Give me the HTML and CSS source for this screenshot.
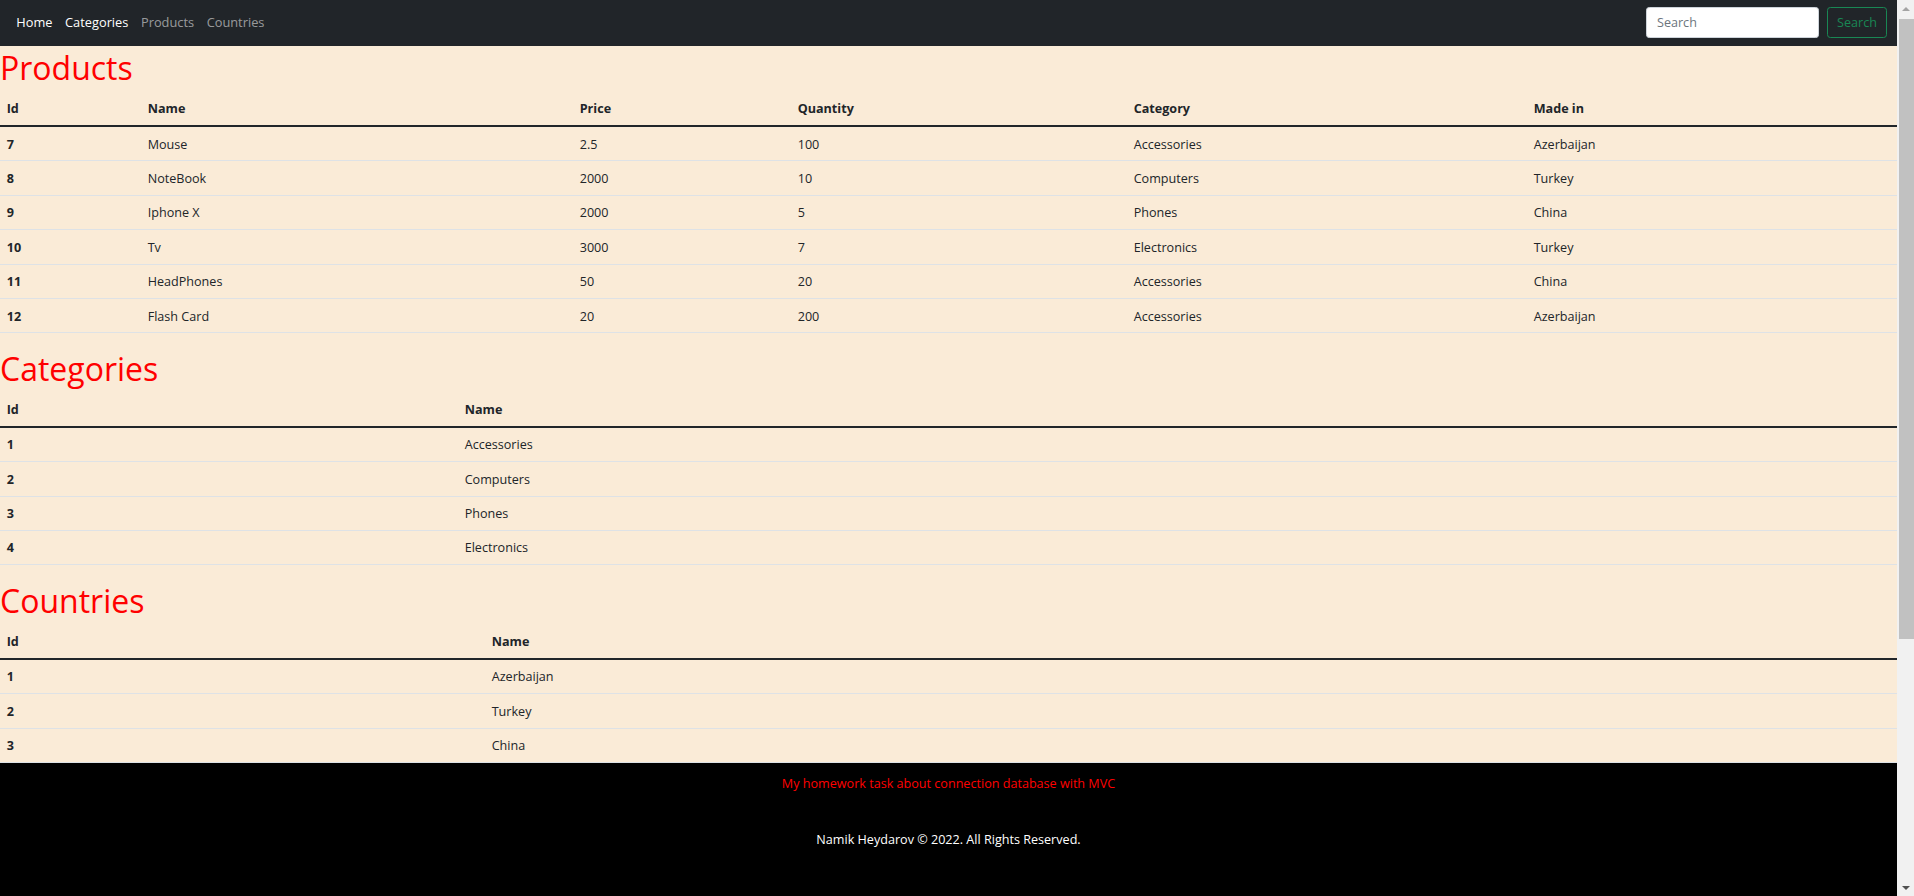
FILE: index.html
```html
<!DOCTYPE html>
<html lang="en">
<head>
<meta charset="utf-8">
<title>Homework</title>
<link rel="stylesheet" href="styles.css">
</head>
<body>
<div class="page">
  <nav class="navbar">
    <ul class="nav">
      <li><a class="nav-link active" href="#">Home</a></li>
      <li><a class="nav-link active" href="#">Categories</a></li>
      <li><a class="nav-link" href="#">Products</a></li>
      <li><a class="nav-link" href="#">Countries</a></li>
    </ul>
    <form class="search">
      <input class="search-input" type="search" placeholder="Search">
      <button class="search-btn" type="button">Search</button>
    </form>
  </nav>
  <main class="content">
    <section class="block">
      <h1 class="title">Products</h1>
      <table class="table products">
        <colgroup>
          <col class="c-id"><col class="c-name"><col class="c-price"><col class="c-qty"><col class="c-cat"><col>
        </colgroup>
        <thead>
          <tr><th>Id</th><th>Name</th><th>Price</th><th>Quantity</th><th>Category</th><th>Made in</th></tr>
        </thead>
        <tbody>
          <tr><th>7</th><td>Mouse</td><td>2.5</td><td>100</td><td>Accessories</td><td>Azerbaijan</td></tr>
          <tr><th>8</th><td>NoteBook</td><td>2000</td><td>10</td><td>Computers</td><td>Turkey</td></tr>
          <tr><th>9</th><td>Iphone X</td><td>2000</td><td>5</td><td>Phones</td><td>China</td></tr>
          <tr><th>10</th><td>Tv</td><td>3000</td><td>7</td><td>Electronics</td><td>Turkey</td></tr>
          <tr><th>11</th><td>HeadPhones</td><td>50</td><td>20</td><td>Accessories</td><td>China</td></tr>
          <tr><th>12</th><td>Flash Card</td><td>20</td><td>200</td><td>Accessories</td><td>Azerbaijan</td></tr>
        </tbody>
      </table>
    </section>
    <section class="block">
      <h1 class="title">Categories</h1>
      <table class="table categories">
        <colgroup><col class="c-id2"><col></colgroup>
        <thead>
          <tr><th>Id</th><th>Name</th></tr>
        </thead>
        <tbody>
          <tr><th>1</th><td>Accessories</td></tr>
          <tr><th>2</th><td>Computers</td></tr>
          <tr><th>3</th><td>Phones</td></tr>
          <tr><th>4</th><td>Electronics</td></tr>
        </tbody>
      </table>
    </section>
    <section class="block">
      <h1 class="title">Countries</h1>
      <table class="table countries">
        <colgroup><col class="c-id3"><col></colgroup>
        <thead>
          <tr><th>Id</th><th>Name</th></tr>
        </thead>
        <tbody>
          <tr><th>1</th><td>Azerbaijan</td></tr>
          <tr><th>2</th><td>Turkey</td></tr>
          <tr><th>3</th><td>China</td></tr>
        </tbody>
      </table>
    </section>
  </main>
  <footer class="footer">
    <p class="footer-task">My homework task about connection database with MVC</p>
    <p class="footer-copy">Namik Heydarov © 2022. All Rights Reserved.</p>
  </footer>
</div>
<div class="scrollbar">
  <div class="sb-arrow sb-up"></div>
  <div class="sb-track"><div class="sb-thumb"></div></div>
  <div class="sb-arrow sb-down"></div>
</div>
</body>
</html>
```

FILE: styles.css
```css
html, body {
  margin: 0;
  padding: 0;
  height: 100%;
}

body {
  display: flex;
  overflow: hidden;
  font-family: "Open Sans", "Noto Sans", "Liberation Sans", sans-serif;
  font-size: 12.6px;
  line-height: 20px;
  color: #212529;
  background: #f1f1f1;
}

.page {
  flex: 1;
  min-width: 0;
  height: 100%;
  overflow: hidden;
  display: flex;
  flex-direction: column;
  background: #faebd7;
}

/* Navbar */
.navbar {
  flex: 0 0 auto;
  height: 46px;
  box-sizing: border-box;
  background: #212529;
  display: flex;
  align-items: flex-start;
  justify-content: space-between;
  padding: 7px 10px 0 10px;
}

.nav {
  list-style: none;
  margin: 0;
  padding: 0;
  display: flex;
}

.nav-link {
  display: block;
  padding: 0 6.3px;
  line-height: 31px;
  color: rgba(255, 255, 255, 0.55);
  text-decoration: none;
  font-size: 12.8px;
}

.nav-link.active {
  color: #fff;
}

.search {
  display: flex;
  gap: 8px;
}

.search-input {
  box-sizing: border-box;
  width: 173px;
  height: 31px;
  margin: 0;
  padding: 0 10px;
  border: 1px solid #ced4da;
  border-radius: 3.3px;
  background: #fff;
  font-family: inherit;
  font-size: 12.6px;
  color: #212529;
  outline: none;
}

.search-input::placeholder {
  color: #6c757d;
}

.search-btn {
  box-sizing: border-box;
  width: 60px;
  height: 31px;
  margin: 0;
  padding: 0;
  border: 1px solid #198754;
  border-radius: 3.3px;
  background: transparent;
  color: #198754;
  font-family: inherit;
  font-size: 12.6px;
}

/* Content */
.content {
  flex: 0 0 auto;
}

.title {
  margin: 0 0 5.7px 0;
  padding-top: 3px;
  font-size: 32px;
  line-height: 37px;
  font-weight: 400;
  color: #ff0000;
}

.table {
  width: 100%;
  table-layout: fixed;
  border-collapse: collapse;
  margin-bottom: 13.3px;
}

.block:last-child .table {
  margin-bottom: 0;
}

.table th,
.table td {
  padding: 7.5px 6.7px 5.9px 6.7px;
  text-align: left;
  vertical-align: top;
  border-bottom: 1px solid #dee2e6;
  line-height: 20px;
}

.table th {
  font-weight: 700;
}

.table td {
  font-weight: 400;
}

.table tbody {
  border-top: 2px solid #212529;
}

.c-id { width: 141px; }
.c-name { width: 432px; }
.c-price { width: 218px; }
.c-qty { width: 336px; }
.c-cat { width: 400px; }

.c-id2 { width: 458px; }
.c-id3 { width: 485px; }

/* Footer */
.footer {
  flex: 1 0 auto;
  background: #000;
  text-align: center;
  padding-top: 11px;
}

.footer p {
  margin: 0;
  line-height: 20px;
}

.footer-task {
  color: #ff0000;
}

.footer-copy {
  color: #fff;
  margin-top: 36px !important;
}

/* Scrollbar */
.scrollbar {
  flex: 0 0 17px;
  height: 100%;
  display: flex;
  flex-direction: column;
  background: #f1f1f1;
}

.sb-arrow {
  flex: 0 0 17px;
  display: flex;
  align-items: center;
  justify-content: center;
}

.sb-up::before,
.sb-down::before {
  content: "";
  width: 0;
  height: 0;
  border-left: 4px solid transparent;
  border-right: 4px solid transparent;
}

.sb-up::before {
  border-bottom: 4px solid #a3a3a3;
}

.sb-down::before {
  border-top: 4px solid #505050;
}

.sb-track {
  flex: 1;
  padding: 2px 0 0 2px;
}

.sb-thumb {
  height: 620px;
  background: #c1c1c1;
}
```
